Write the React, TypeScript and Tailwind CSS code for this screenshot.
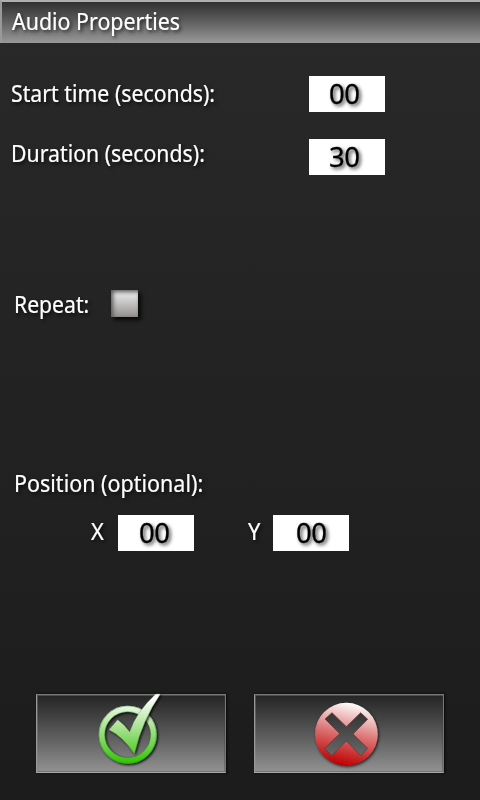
import type { ReactNode } from 'react';

const labelStyle =
  "block w-max origin-left whitespace-nowrap pb-0.5 font-['Noto_Sans','Open_Sans',sans-serif] text-[23px] leading-[30px] text-white [text-shadow:2px_2px_4px_rgba(0,0,0,0.7)] [-webkit-text-stroke:0.2px_white]";

function Label({ children, className = '' }: { children: ReactNode; className?: string }) {
  return <span className={`${labelStyle} ${className}`}>{children}</span>;
}

function Field({ value, className = 'pl-5' }: { value: string; className?: string }) {
  return (
    <div className={`h-9 w-[76px] shrink-0 bg-white ${className}`}>
      <span className="block w-max origin-left scale-x-[0.98] font-['Noto_Sans','Open_Sans',sans-serif] text-[28px] leading-[34px] tracking-[-0.5px] text-black [-webkit-text-stroke:0.3px_black] [text-shadow:2px_2px_4px_rgba(0,0,0,0.8)]">
        {value}
      </span>
    </div>
  );
}

function ActionButton({ label, children }: { label: string; children: ReactNode }) {
  return (
    <button
      aria-label={label}
      className="h-[79px] w-[190px] border border-t-[#777777] border-r-[#777777] border-b-[#a8a8a8] border-l-[#999999] bg-linear-to-b from-[#252525] to-[#929292] shadow-[1px_0px_2px_#080808,inset_1px_1px_0px_rgba(140,140,140,0.4),inset_-1px_-1px_0px_rgba(60,60,60,0.35)]"
    >
      <svg viewBox="30 27 570 237" className="-ml-px -mt-px block h-[79px] w-[190px] max-w-none overflow-visible">
        {children}
      </svg>
    </button>
  );
}

function CheckIcon() {
  return (
    <>
      <defs>
        <linearGradient id="green" gradientUnits="userSpaceOnUse" x1="0" y1="40" x2="0" y2="235">
          <stop offset="0" stopColor="#ffffff" />
          <stop offset="0.45" stopColor="#a9e292" />
          <stop offset="1" stopColor="#2fc600" />
        </linearGradient>
        <filter id="checkShadow" x="-20%" y="-20%" width="150%" height="150%">
          <feDropShadow dx="4" dy="4" stdDeviation="3" floodColor="#000" floodOpacity="0.85" />
        </filter>
      </defs>
      <g filter="url(#checkShadow)">
        <circle cx="305" cy="149" r="78" fill="none" stroke="url(#green)" strokeWidth="18" />
        <circle cx="305" cy="149" r="86" fill="none" stroke="#387832" strokeOpacity="0.5" strokeWidth="2.5" />
        <circle cx="305" cy="149" r="69" fill="none" stroke="#387832" strokeOpacity="0.45" strokeWidth="2.5" />
      </g>
      <path
        d="M249 134 L275 104 Q295 118 311 141 Q329 83 389 27 H403 Q349 105 325 206 Q292 155 249 134 Z"
        fill="url(#green)"
        stroke="#59824f"
        strokeOpacity="0.45"
        strokeWidth="2"
        filter="url(#checkShadow)"
      />
    </>
  );
}

function CancelIcon() {
  return (
    <>
      <defs>
        <linearGradient id="red" gradientUnits="userSpaceOnUse" x1="330" y1="54" x2="288" y2="239">
          <stop offset="0" stopColor="#ffffff" />
          <stop offset="0.5" stopColor="#dc7474" />
          <stop offset="1" stopColor="#be0000" />
        </linearGradient>
        <linearGradient id="cross" gradientUnits="userSpaceOnUse" x1="0" y1="83" x2="0" y2="212">
          <stop offset="0" stopColor="#333333" />
          <stop offset="1" stopColor="#686868" />
        </linearGradient>
        <filter id="discShadow" x="-20%" y="-20%" width="150%" height="150%">
          <feDropShadow dx="3" dy="4" stdDeviation="4" floodColor="#000" floodOpacity="0.8" />
        </filter>
      </defs>
      <circle cx="307" cy="147.5" r="94" fill="url(#red)" filter="url(#discShadow)" />
      <path
        d="M264 83 L307 125 L350 83 L371 103 L327 147 L371 190 L350 212 L307 168 L263 212 L242 190 L287 146 L243 102 Z"
        fill="url(#cross)"
        stroke="#5a3030"
        strokeOpacity="0.6"
        strokeWidth="3"
      />
    </>
  );
}

export default function App() {
  return (
    <main className="flex h-[800px] w-[480px] flex-col overflow-hidden bg-linear-to-b from-[#292929] to-[#1c1c1c]">
      <header className="h-[43px] shrink-0 border-l-2 border-t-2 border-l-[#999999] border-t-[#b0b0b0] bg-linear-to-b from-[#303030] to-[#999999] pl-[10px] pt-1">
        <Label className="scale-x-[0.93]">Audio Properties</Label>
      </header>

      <section className="flex flex-col gap-[27px] pl-[11px] pt-[33px]">
        <div className="flex h-9 items-start">
          <div className="w-[298px] pt-[2px]">
            <Label className="scale-x-[0.925]">Start time (seconds):</Label>
          </div>
          <Field value="00" />
        </div>
        <div className="flex h-9 items-start">
          <div className="w-[298px]">
            <Label className="-mt-px scale-x-[0.925]">Duration (seconds):</Label>
          </div>
          <Field value="30" />
        </div>
      </section>

      <section className="mt-[114px] flex pl-[14px]">
        <div className="w-[97px]">
          <Label className="scale-x-[0.92]">Repeat:</Label>
        </div>
        <button
          aria-label="Repeat"
          className="mt-px h-[27px] w-[27px] bg-linear-to-b from-[#f4f4f4] to-[#949090] shadow-[3px_3px_4px_#080808,inset_2px_2px_4px_#555555]"
        />
      </section>

      <section className="mt-[147px]">
        <div className="pl-[14px]">
          <Label className="scale-x-[0.935]">Position (optional):</Label>
        </div>
        <div className="mt-[15px] flex">
          <div className="w-[118px] pl-[91px] pt-px">
            <Label className="scale-x-[0.95]">X</Label>
          </div>
          <Field value="00" className="pl-[21px]" />
          <div className="w-[79px] pl-[54px] pt-px">
            <Label className="scale-x-[0.95]">Y</Label>
          </div>
          <Field value="00" className="pl-[23px]" />
        </div>
      </section>

      <footer className="mt-[143px] flex gap-7 pl-9">
        <ActionButton label="Confirm">
          <CheckIcon />
        </ActionButton>
        <ActionButton label="Cancel">
          <CancelIcon />
        </ActionButton>
      </footer>
    </main>
  );
}
